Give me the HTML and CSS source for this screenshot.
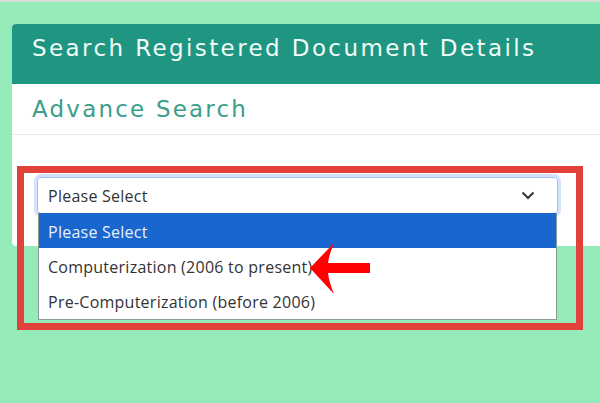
FILE: index.html
```html
<!DOCTYPE html>
<html lang="en">

<head>
    <meta charset="UTF-8">
    <meta name="viewport" content="width=device-width, initial-scale=1.0">
    <title>Search Registered Document Details</title>
    <link rel="stylesheet" href="styles.css">
</head>

<body>
    <div class="page">
        <div class="card">
            <div class="card-header">Search Registered Document Details</div>
            <div class="card-title">Advance Search</div>

            <div class="card-body">
                <div class="select-wrap">
                    <div class="select">
                        <span>Please Select</span>
                        <svg class="chevron" width="14" height="9" viewBox="0 0 14 9">
                            <path d="M1.5 1.5 L7 7 L12.5 1.5" fill="none" stroke="#333" stroke-width="2" />
                        </svg>
                    </div>

                    <ul class="options">
                        <li class="active">Please Select</li>
                        <li>Computerization (2006 to present)</li>
                        <li>Pre-Computerization (before 2006)</li>
                    </ul>

                    <!-- annotation box + arrow drawn over the screenshot -->
                    <div class="highlight-box"></div>
                    <svg class="arrow" width="64" height="54" viewBox="0 0 64 54">
                        <path d="M0 26 L24 1 Q19 13 18 21 L60 21 L60 31 L18 31 Q19 40 24 52 Z" fill="#ff0000" />
                    </svg>
                </div>
            </div>
        </div>
    </div>
</body>

</html>
```

FILE: styles.css
```css
body {
    margin: 0;
    padding: 0;
    background: #94ebb9;
    border-top: 2px solid #d9ddd9;
    height: 401px;
    overflow: hidden;
}

.page {
    padding: 22px 0 0 12px;
}

.card {
    background: #fff;
    border-radius: 4px 0 0 4px;
    margin-right: -10px;
    height: 222px;
}

.card-header {
    background: #1e9681;
    color: #f2fbf8;
    font-family: "DejaVu Sans", Verdana, sans-serif;
    font-size: 23px;
    letter-spacing: 2.4px;
    height: 60px;
    line-height: 48px;
    padding-left: 20px;
    border-radius: 4px 0 0 0;
}

.card-title {
    color: #3b9e8a;
    font-family: "DejaVu Sans", Verdana, sans-serif;
    font-size: 23px;
    letter-spacing: 2.2px;
    height: 50px;
    line-height: 50px;
    padding-left: 20px;
    border-bottom: 1px solid #ececec;
}

.card-body {
    padding: 42px 0 0 25px;
}

.select-wrap {
    position: relative;
    width: 521px;
}

.select {
    box-sizing: border-box;
    height: 37px;
    border: 1px solid #9ec2f7;
    border-radius: 4px;
    box-shadow: 0 0 0 3px rgba(110, 160, 250, 0.3);
    display: flex;
    align-items: center;
    justify-content: space-between;
    padding: 0 22px 0 10px;
    font-family: "Open Sans", "Noto Sans", sans-serif;
    font-size: 16px;
    letter-spacing: 0.25px;
    color: #333;
}

.options {
    position: absolute;
    top: 36px;
    left: 1px;
    width: 519px;
    box-sizing: border-box;
    margin: 0;
    padding: 0 0 1px;
    list-style: none;
    background: #fff;
    border: 1px solid #8a9a94;
    border-top: none;
    font-family: "Open Sans", "Noto Sans", sans-serif;
    font-size: 16px;
    letter-spacing: 0.25px;
    color: #333;
}

.options li {
    height: 35px;
    box-sizing: border-box;
    padding: 3px 0 0 9px;
    line-height: 32px;
}

.options li.active {
    background: #1a66cf;
    color: #e8f0fc;
}

.highlight-box {
    position: absolute;
    top: -11px;
    left: -20px;
    width: 566px;
    height: 164px;
    box-sizing: border-box;
    border: 7px solid #e2403a;
}

.arrow {
    position: absolute;
    left: 273px;
    top: 65px;
}
```
